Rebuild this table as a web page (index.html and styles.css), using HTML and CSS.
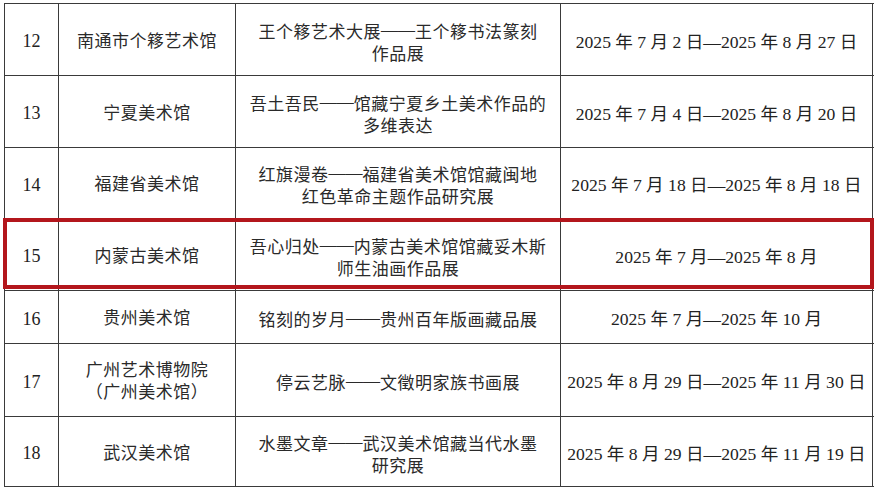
FILE: index.html
```html
<!DOCTYPE html>
<html lang="zh-CN">
<head>
<meta charset="utf-8">
<title>展览列表</title>
<link rel="stylesheet" href="styles.css">
</head>
<body>
<div class="sheet">
  <div class="table">
    <div class="row h72">
      <div class="cell num">12</div>
      <div class="cell name">南通市个簃艺术馆</div>
      <div class="cell title"><span>王个簃艺术大展<span class="dash">——</span>王个簃书法篆刻</span><span>作品展</span></div>
      <div class="cell date">2025 年 7 月 2 日—2025 年 8 月 27 日</div>
    </div>
    <div class="row h72">
      <div class="cell num">13</div>
      <div class="cell name">宁夏美术馆</div>
      <div class="cell title"><span>吾土吾民<span class="dash">——</span>馆藏宁夏乡土美术作品的</span><span>多维表达</span></div>
      <div class="cell date">2025 年 7 月 4 日—2025 年 8 月 20 日</div>
    </div>
    <div class="row h71">
      <div class="cell num">14</div>
      <div class="cell name">福建省美术馆</div>
      <div class="cell title"><span>红旗漫卷<span class="dash">——</span>福建省美术馆馆藏闽地</span><span>红色革命主题作品研究展</span></div>
      <div class="cell date">2025 年 7 月 18 日—2025 年 8 月 18 日</div>
    </div>
    <div class="row h72 highlight">
      <div class="cell num">15</div>
      <div class="cell name">内蒙古美术馆</div>
      <div class="cell title"><span>吾心归处<span class="dash">——</span>内蒙古美术馆馆藏妥木斯</span><span>师生油画作品展</span></div>
      <div class="cell date">2025 年 7 月—2025 年 8 月</div>
    </div>
    <div class="row h53">
      <div class="cell num">16</div>
      <div class="cell name">贵州美术馆</div>
      <div class="cell title"><span>铭刻的岁月<span class="dash">——</span>贵州百年版画藏品展</span></div>
      <div class="cell date">2025 年 7 月—2025 年 10 月</div>
    </div>
    <div class="row h73">
      <div class="cell num">17</div>
      <div class="cell name"><span>广州艺术博物院</span><span>（广州美术馆）</span></div>
      <div class="cell title"><span>停云艺脉<span class="dash">——</span>文徵明家族书画展</span></div>
      <div class="cell date">2025 年 8 月 29 日—2025 年 11 月 30 日</div>
    </div>
    <div class="row h70">
      <div class="cell num">18</div>
      <div class="cell name">武汉美术馆</div>
      <div class="cell title"><span>水墨文章<span class="dash">——</span>武汉美术馆藏当代水墨</span><span>研究展</span></div>
      <div class="cell date">2025 年 8 月 29 日—2025 年 11 月 19 日</div>
    </div>
  </div>
</div>
</body>
</html>
```

FILE: styles.css
```css
html, body {
  margin: 0;
  padding: 0;
  background: #ffffff;
}

.sheet {
  padding: 3px 0 0 4px;
  font-family: "Liberation Serif", "Noto Sans CJK SC", serif;
  color: #222222;
}

.table {
  display: flex;
  flex-direction: column;
  width: 869px;
  border-top: 1px solid #3a3a3a;
  border-left: 1px solid #3a3a3a;
}

.row {
  display: grid;
  grid-template-columns: 54px 177px 325px 312px;
  border-bottom: 1px solid #3a3a3a;
  box-sizing: border-box;
}

.h72 { height: 72px; }
.h71 { height: 71px; }
.h53 { height: 53px; }
.h73 { height: 73px; }
.h70 { height: 70px; }

.cell {
  border-right: 1px solid #3a3a3a;
  display: flex;
  flex-direction: column;
  align-items: center;
  justify-content: center;
  white-space: nowrap;
  line-height: 22px;
}

.num {
  font-size: 18px;
  padding-top: 3px;
}

.name, .title {
  font-family: "Noto Sans CJK SC", sans-serif;
  font-size: 17px;
  letter-spacing: 0.5px;
  font-weight: 400;
  color: #2a2a2a;
}

.title {
  padding-top: 3px;
}

.dash {
  font-family: "Liberation Serif", serif;
  letter-spacing: 0;
  vertical-align: 3px;
}

.date {
  font-size: 17.6px;
  letter-spacing: 0;
  padding-top: 4px;
}

.highlight {
  position: relative;
}

.highlight::after {
  content: "";
  position: absolute;
  top: -1px;
  bottom: 1px;
  left: -2px;
  right: 0;
  border: 4px solid #b3161c;
  pointer-events: none;
}
```
